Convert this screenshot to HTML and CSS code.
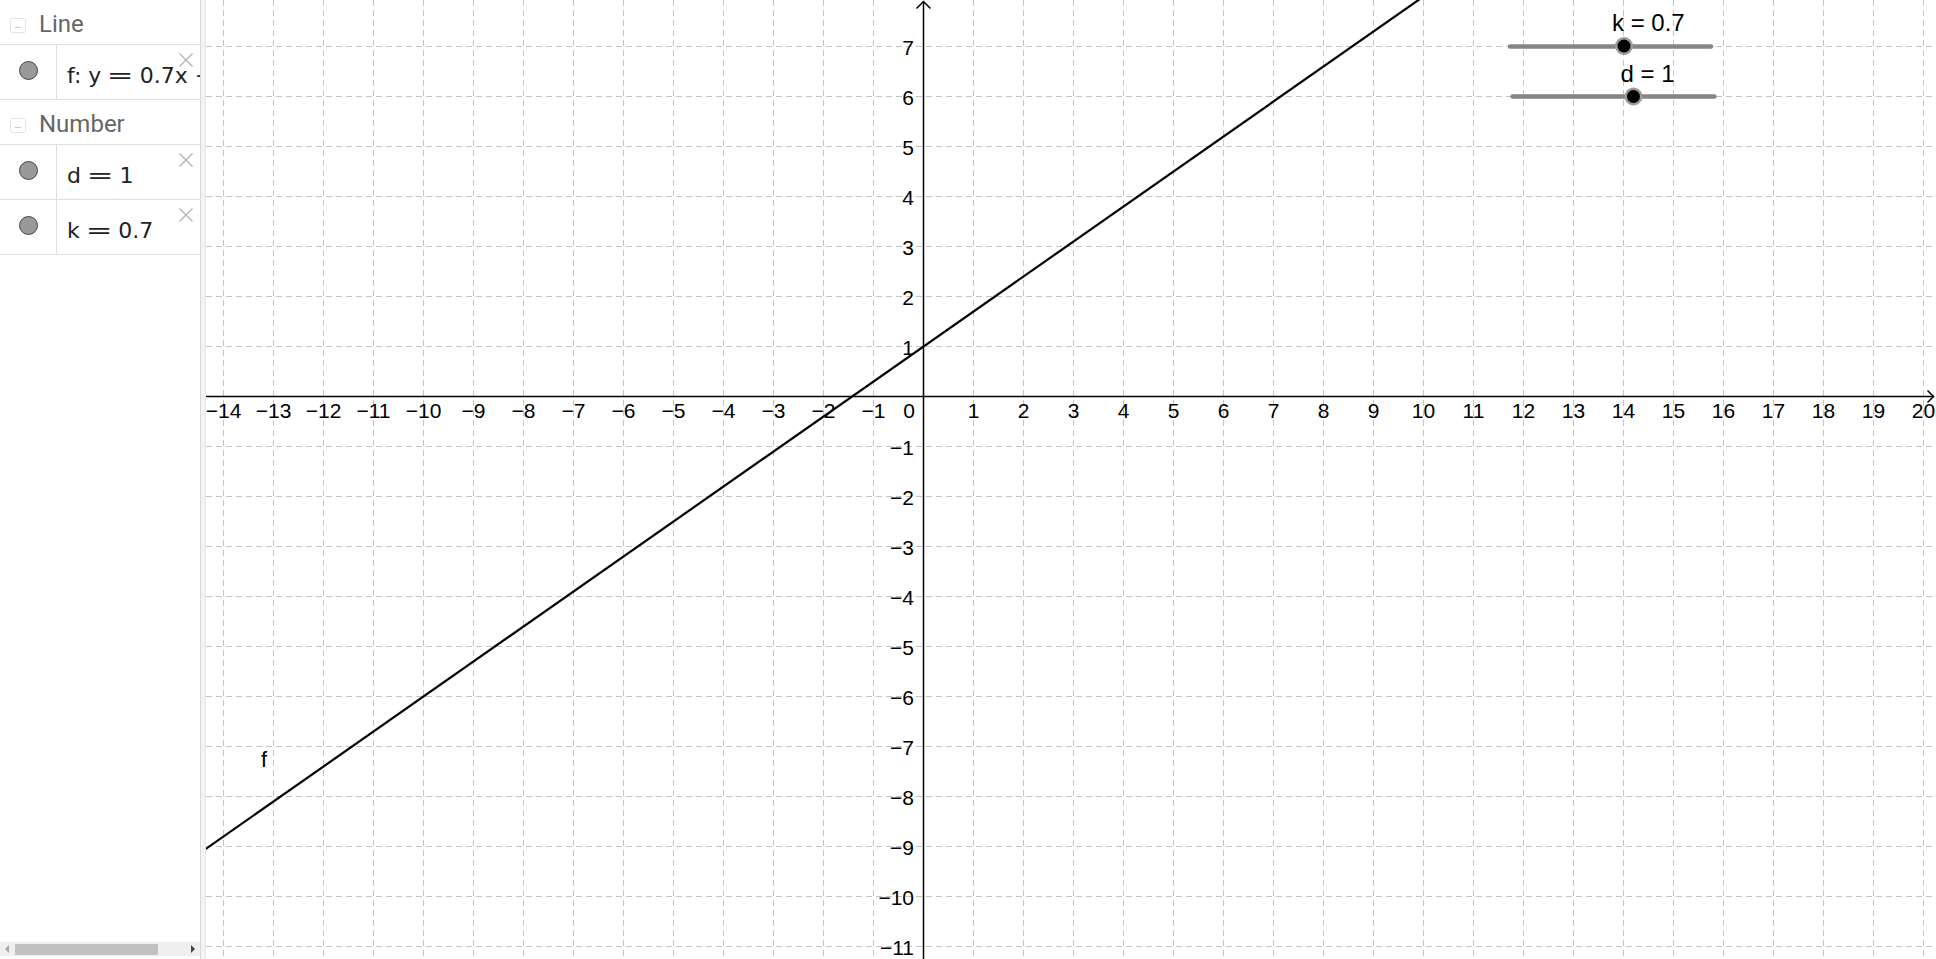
FILE: index.html
```html
<!DOCTYPE html>
<html>
<head>
<meta charset="utf-8">
<title>Graph</title>
<link rel="stylesheet" href="styles.css">
</head>
<body>
<div class="app">
  <aside class="algebra">
    <div class="list">
      <div class="group"><span class="toggle"></span><span class="gname">Line</span></div>
      <div class="item">
        <div class="marble-col"><span class="marble"></span></div>
        <div class="expr">f: y <span class="eq">=</span> 0.7x + 1</div>
        <svg class="del" viewBox="0 0 16 16"><path d="M1.5 1.5L14.5 14.5M14.5 1.5L1.5 14.5"/></svg>
      </div>
      <div class="group"><span class="toggle"></span><span class="gname">Number</span></div>
      <div class="item">
        <div class="marble-col"><span class="marble"></span></div>
        <div class="expr">d <span class="eq">=</span> 1</div>
        <svg class="del" viewBox="0 0 16 16"><path d="M1.5 1.5L14.5 14.5M14.5 1.5L1.5 14.5"/></svg>
      </div>
      <div class="item">
        <div class="marble-col"><span class="marble"></span></div>
        <div class="expr">k <span class="eq">=</span> 0.7</div>
        <svg class="del" viewBox="0 0 16 16"><path d="M1.5 1.5L14.5 14.5M14.5 1.5L1.5 14.5"/></svg>
      </div>
    </div>
    <div class="hscroll">
      <span class="arrow-l"></span>
      <span class="thumb"></span>
      <span class="arrow-r"></span>
    </div>
  </aside>
  <div class="splitter"></div>
  <svg class="graph" width="1730" height="959" viewBox="206 0 1730 959">
    <path class="grid" d="M223.5 0V959M273.5 0V959M323.5 0V959M373.5 0V959M423.5 0V959M473.5 0V959M523.5 0V959M573.5 0V959M623.5 0V959M673.5 0V959M723.5 0V959M773.5 0V959M823.5 0V959M873.5 0V959M973.5 0V959M1023.5 0V959M1073.5 0V959M1123.5 0V959M1173.5 0V959M1223.5 0V959M1273.5 0V959M1323.5 0V959M1373.5 0V959M1423.5 0V959M1473.5 0V959M1523.5 0V959M1573.5 0V959M1623.5 0V959M1673.5 0V959M1723.5 0V959M1773.5 0V959M1823.5 0V959M1873.5 0V959M1923.5 0V959"/>
    <path class="grid" d="M206 46.5H1936M206 96.5H1936M206 146.5H1936M206 196.5H1936M206 246.5H1936M206 296.5H1936M206 346.5H1936M206 446.5H1936M206 496.5H1936M206 546.5H1936M206 596.5H1936M206 646.5H1936M206 696.5H1936M206 746.5H1936M206 796.5H1936M206 846.5H1936M206 896.5H1936M206 946.5H1936"/>
    <path class="axis" d="M206 396.5H1934M923.5 1.5V959"/>
    <path class="axis" d="M916.5 8.5L923.5 1.5L930.5 8.5M1927.5 390.5L1933.5 396.5L1927.5 402.5"/>
    <g class="lab xlab">
      <text x="223.5" y="418">−14</text>
      <text x="273.5" y="418">−13</text>
      <text x="323.5" y="418">−12</text>
      <text x="373.5" y="418">−11</text>
      <text x="423.5" y="418">−10</text>
      <text x="473.5" y="418">−9</text>
      <text x="523.5" y="418">−8</text>
      <text x="573.5" y="418">−7</text>
      <text x="623.5" y="418">−6</text>
      <text x="673.5" y="418">−5</text>
      <text x="723.5" y="418">−4</text>
      <text x="773.5" y="418">−3</text>
      <text x="823.5" y="418">−2</text>
      <text x="873.5" y="418">−1</text>
      <text x="973.5" y="418">1</text>
      <text x="1023.5" y="418">2</text>
      <text x="1073.5" y="418">3</text>
      <text x="1123.5" y="418">4</text>
      <text x="1173.5" y="418">5</text>
      <text x="1223.5" y="418">6</text>
      <text x="1273.5" y="418">7</text>
      <text x="1323.5" y="418">8</text>
      <text x="1373.5" y="418">9</text>
      <text x="1423.5" y="418">10</text>
      <text x="1473.5" y="418">11</text>
      <text x="1523.5" y="418">12</text>
      <text x="1573.5" y="418">13</text>
      <text x="1623.5" y="418">14</text>
      <text x="1673.5" y="418">15</text>
      <text x="1723.5" y="418">16</text>
      <text x="1773.5" y="418">17</text>
      <text x="1823.5" y="418">18</text>
      <text x="1873.5" y="418">19</text>
      <text x="1923.5" y="418">20</text>
    </g>
    <g class="lab ylab">
      <text x="915" y="418">0</text>
      <text x="914" y="54.5">7</text>
      <text x="914" y="104.5">6</text>
      <text x="914" y="154.5">5</text>
      <text x="914" y="204.5">4</text>
      <text x="914" y="254.5">3</text>
      <text x="914" y="304.5">2</text>
      <text x="914" y="354.5">1</text>
      <text x="914" y="454.5">−1</text>
      <text x="914" y="504.5">−2</text>
      <text x="914" y="554.5">−3</text>
      <text x="914" y="604.5">−4</text>
      <text x="914" y="654.5">−5</text>
      <text x="914" y="704.5">−6</text>
      <text x="914" y="754.5">−7</text>
      <text x="914" y="804.5">−8</text>
      <text x="914" y="854.5">−9</text>
      <text x="914" y="904.5">−10</text>
      <text x="914" y="954.5">−11</text>
    </g>
    <path class="fline" d="M173.5 871.5L1448.5 -21"/>
    <text class="flabel" x="261" y="767">f</text>
    <g class="slider">
      <text class="slab" x="1612" y="31">k = 0.7</text>
      <path class="track" d="M1510 46.5H1711"/>
      <circle class="halo" cx="1624" cy="46" r="9"/>
      <circle class="knob" cx="1624" cy="46" r="6.5"/>
    </g>
    <g class="slider">
      <text class="slab" x="1620.5" y="81.5">d = 1</text>
      <path class="track" d="M1512.5 96.5H1714.5"/>
      <circle class="halo" cx="1633.5" cy="96.5" r="9"/>
      <circle class="knob" cx="1633.5" cy="96.5" r="6.5"/>
    </g>
  </svg>
</div>
</body>
</html>
```

FILE: styles.css
```css
html, body {
  margin: 0;
  padding: 0;
  background: #fff;
  overflow: hidden;
}

.app {
  display: flex;
  width: 1936px;
  height: 959px;
}

.algebra {
  width: 200px;
  flex: none;
  display: flex;
  flex-direction: column;
  justify-content: space-between;
  background: #fff;
}

.group {
  height: 44px;
  border-bottom: 1px solid #dedede;
  display: flex;
  align-items: flex-start;
}

.toggle {
  flex: none;
  width: 14px;
  height: 13px;
  margin: 18px 0 0 10px;
  border: 1px solid #e4e4e4;
  border-radius: 2px;
  position: relative;
}

.toggle::after {
  content: "";
  position: absolute;
  left: 4px;
  top: 8px;
  width: 6px;
  height: 1px;
  background: #c8c8c8;
}

.gname {
  margin-left: 13px;
  padding-top: 10px;
  font: 24px/28px Roboto, "Liberation Sans", sans-serif;
  color: #666;
}

.item {
  height: 54px;
  border-bottom: 1px solid #dedede;
  display: flex;
  position: relative;
  overflow: hidden;
}

.marble-col {
  width: 56px;
  flex: none;
  border-right: 1px solid #dedede;
  display: flex;
  justify-content: center;
}

.marble {
  width: 17px;
  height: 17px;
  margin-top: 16px;
  border-radius: 50%;
  background: #999;
  border: 1px solid #444;
}

.expr {
  padding: 17px 0 0 10px;
  font: 22px/27px "DejaVu Sans", sans-serif;
  color: #222;
  white-space: nowrap;
}

.eq {
  display: inline-block;
  margin: 0 3px;
  transform: scaleX(1.45);
}

.del {
  position: absolute;
  top: 7px;
  right: 6px;
  width: 16px;
  height: 16px;
  fill: none;
  stroke: #b4b4b4;
  stroke-width: 1.4;
}

.hscroll {
  height: 14px;
  margin-bottom: 3px;
  background: #efefef;
  display: flex;
  align-items: center;
}

.arrow-l {
  width: 0;
  height: 0;
  margin-left: 5px;
  border-top: 4px solid transparent;
  border-bottom: 4px solid transparent;
  border-right: 4px solid #a6a6a6;
}

.thumb {
  width: 143px;
  height: 11px;
  margin-left: 6px;
  background: #c1c1c1;
}

.arrow-r {
  width: 0;
  height: 0;
  margin-left: auto;
  margin-right: 5px;
  border-top: 4px solid transparent;
  border-bottom: 4px solid transparent;
  border-left: 4px solid #444;
}

.splitter {
  width: 4px;
  flex: none;
  background: #f3f3f3;
  border-left: 1px solid #d8d8d8;
  border-right: 1px solid #e6e6e6;
}

.graph {
  display: block;
  flex: none;
}

.grid {
  fill: none;
  stroke: #c4c4c4;
  stroke-width: 1;
  stroke-dasharray: 6 4;
}

.axis {
  fill: none;
  stroke: #000;
  stroke-width: 1.5;
}

.lab {
  font-family: "Liberation Sans", Arial, sans-serif;
  font-size: 21px;
  fill: #000;
}

.xlab {
  text-anchor: middle;
}

.ylab {
  text-anchor: end;
}

.fline {
  fill: none;
  stroke: #000;
  stroke-width: 2.2;
}

.flabel {
  font-family: "Liberation Sans", Arial, sans-serif;
  font-size: 22px;
  fill: #000;
}

.slab {
  font-family: "Liberation Sans", Arial, sans-serif;
  font-size: 24px;
  fill: #000;
}

.track {
  fill: none;
  stroke: #858585;
  stroke-width: 4.5;
  stroke-linecap: round;
}

.halo {
  fill: #9a9a9a;
}

.knob {
  fill: #000;
}
```
